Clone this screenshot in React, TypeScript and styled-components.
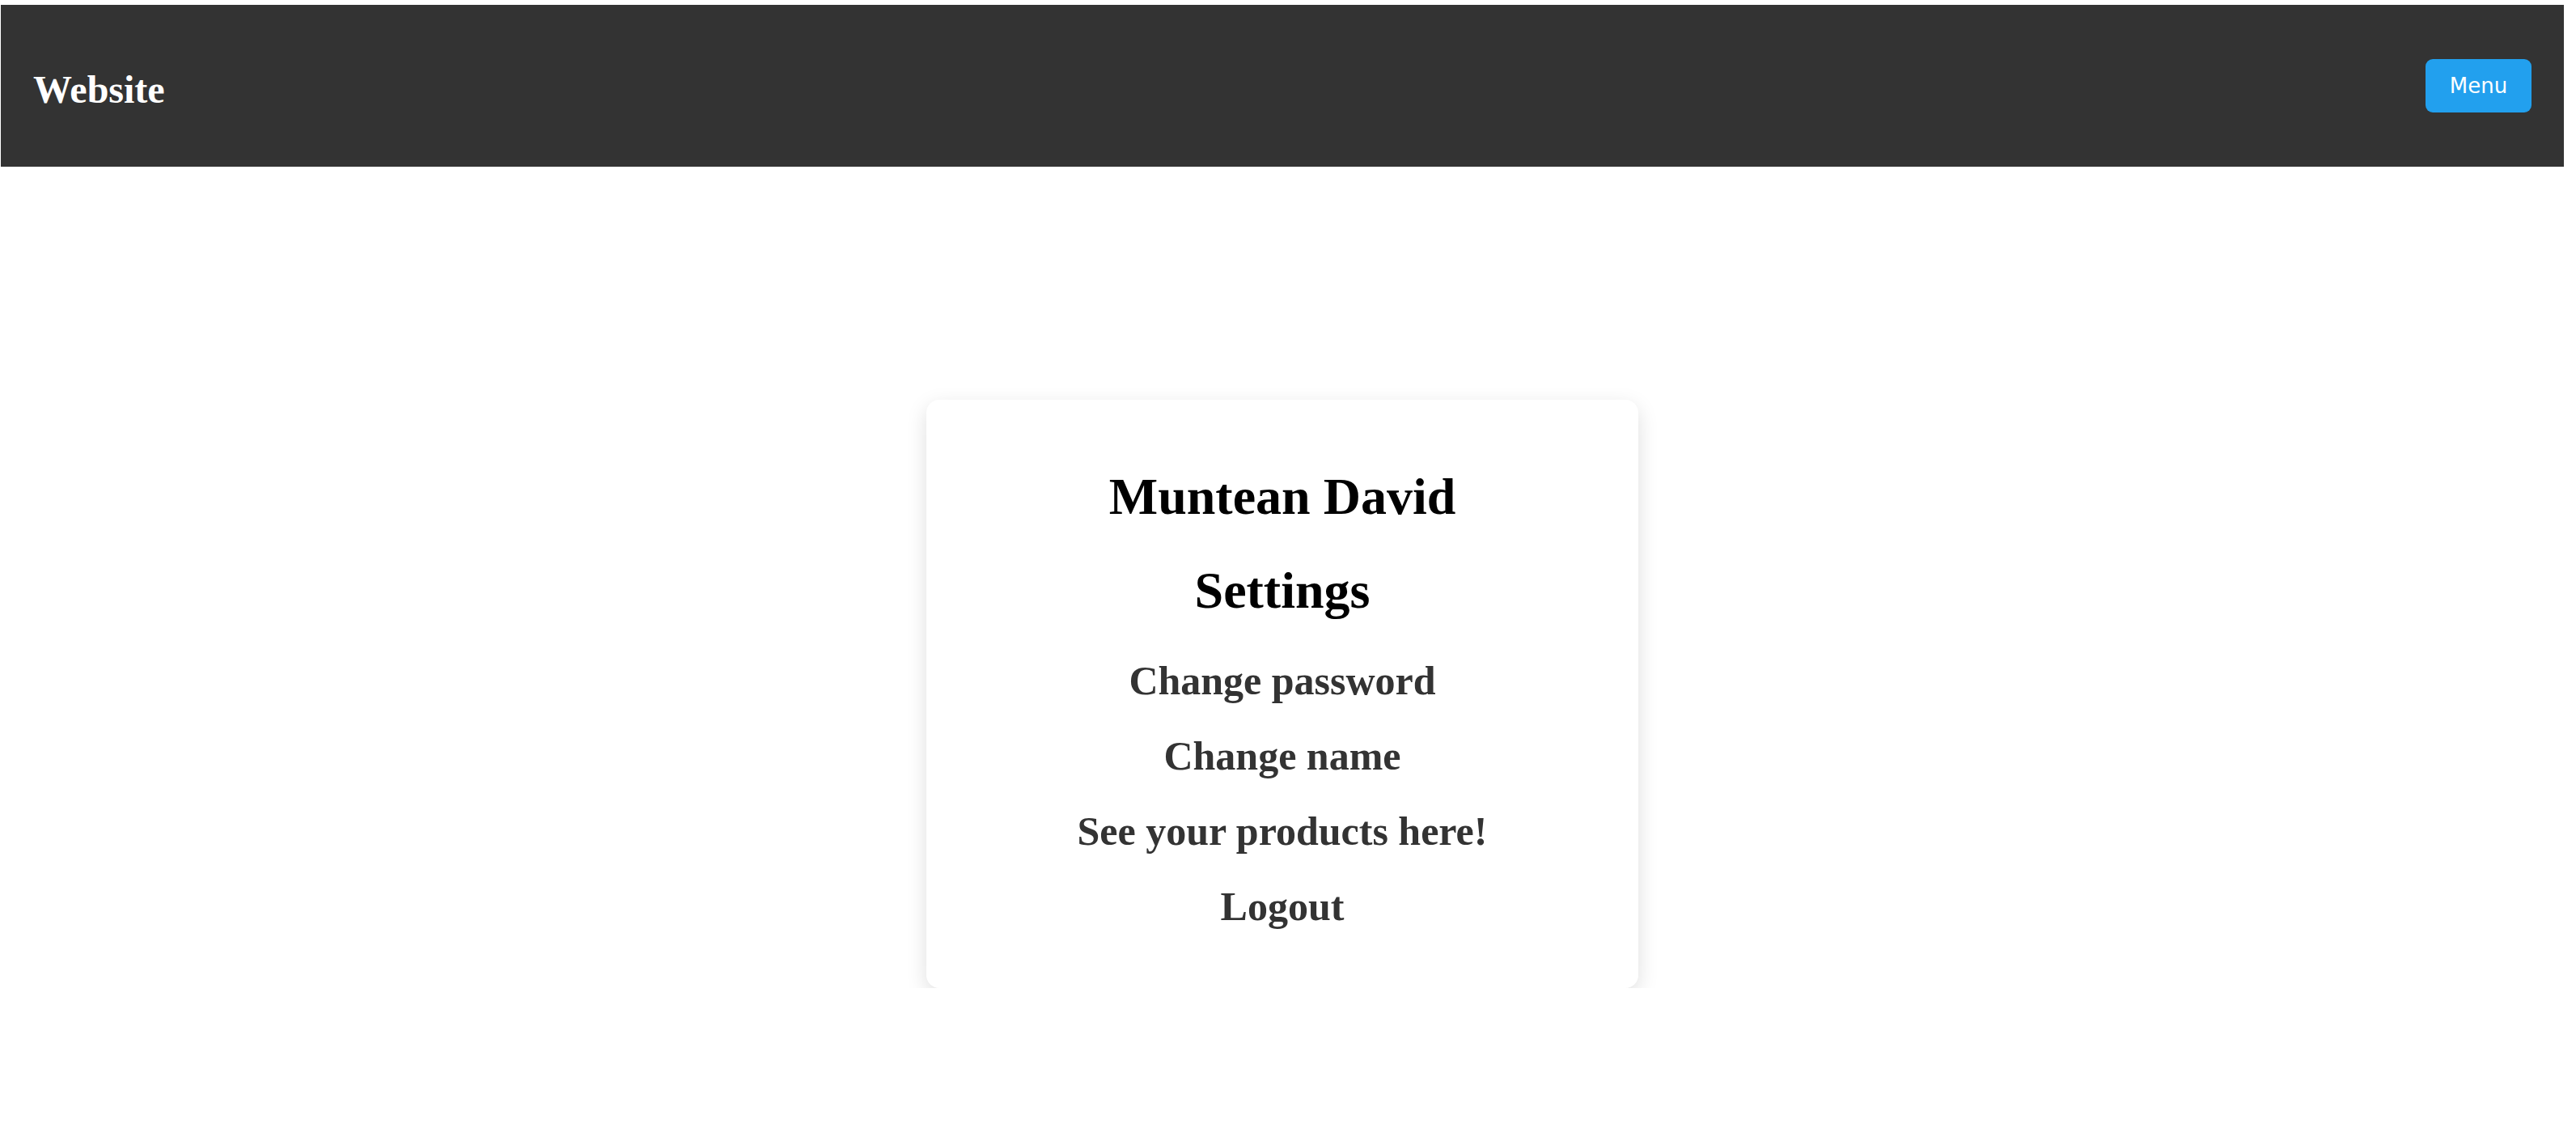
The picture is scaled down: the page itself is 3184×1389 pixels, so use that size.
import { createGlobalStyle, styled } from "styled-components";

const GlobalStyle = createGlobalStyle`
  body {
    margin: 0;
    background: #ffffff;
    font-family: "Liberation Serif", "Times New Roman", serif;
  }
`;

const HeaderRoot = styled.header`
  height: 200px;
  margin: 6px 15px 0 1px;
  padding: 0 40px;
  background: #333333;
  display: flex;
  align-items: center;
  justify-content: space-between;
  box-sizing: border-box;
`;

const Brand = styled.h2`
  margin: 0;
  font-size: 48px;
  font-weight: bold;
  color: #ffffff;
  line-height: 1;
  padding-top: 9px;
`;

const MenuButton = styled.button`
  width: 131px;
  height: 66px;
  border: none;
  border-radius: 9px;
  background: #22a0ee;
  color: #ffffff;
  font-family: "DejaVu Sans", Verdana, sans-serif;
  font-size: 26px;
  cursor: pointer;
`;

const Main = styled.main`
  display: flex;
  justify-content: center;
  padding-top: 288px;
  margin-right: 14px;
`;

const Card = styled.section`
  width: 880px;
  box-sizing: border-box;
  padding: 80px 0 71px;
  background: #ffffff;
  border-radius: 16px;
  box-shadow: 0 8px 26px rgba(0, 0, 0, 0.13);
  display: flex;
  flex-direction: column;
  align-items: center;
`;

const Title = styled.h1<{ $gap?: number }>`
  margin: 0 0 ${(p) => p.$gap ?? 0}px;
  font-size: 64px;
  line-height: 80px;
  font-weight: bold;
  color: #000000;
`;

const Options = styled.div`
  display: flex;
  flex-direction: column;
  align-items: center;
  gap: 33px;
`;

const Option = styled.a`
  font-size: 50px;
  line-height: 60px;
  font-weight: bold;
  color: #333333;
  text-decoration: none;
  cursor: pointer;
`;

const options = ["Change password", "Change name", "See your products here!", "Logout"];

const App = () => {
  return (
    <>
      <GlobalStyle />
      <HeaderRoot>
        <Brand>Website</Brand>
        <MenuButton>Menu</MenuButton>
      </HeaderRoot>
      <Main>
        <Card>
          <Title $gap={36}>Muntean David</Title>
          <Title $gap={41}>Settings</Title>
          <Options>
            {options.map((o) => (
              <Option key={o}>{o}</Option>
            ))}
          </Options>
        </Card>
      </Main>
    </>
  );
};

export default App;
